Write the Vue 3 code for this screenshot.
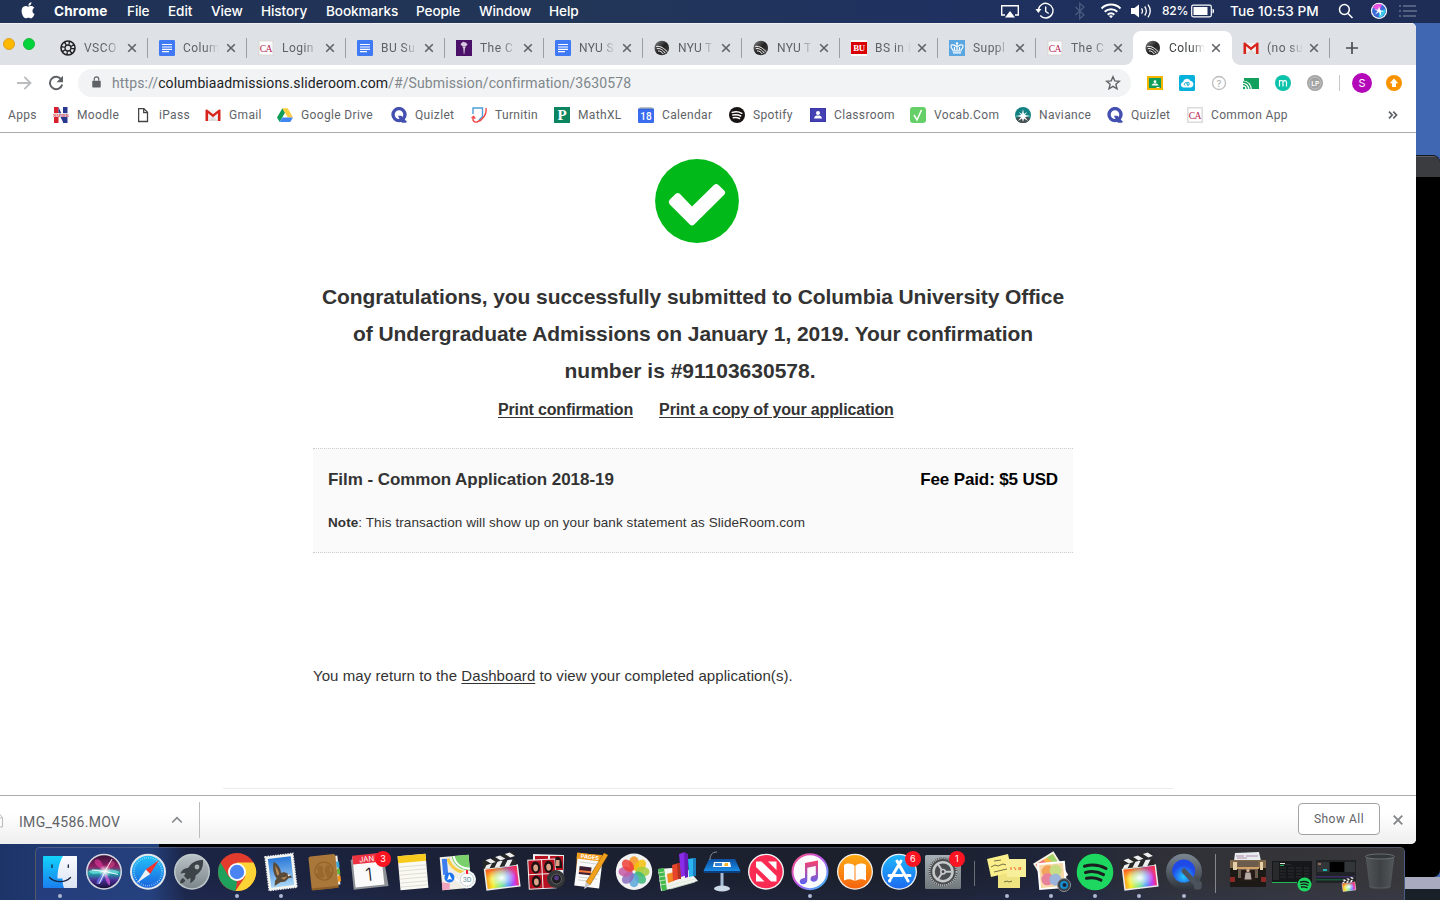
<script setup>
const menus = ['Chrome', 'File', 'Edit', 'View', 'History', 'Bookmarks', 'People', 'Window', 'Help']

const tabs = [
  { icon: 'vsco', title: 'VSCO' },
  { icon: 'docs', title: 'Colum' },
  { icon: 'ca', title: 'Login' },
  { icon: 'docs', title: 'BU Su' },
  { icon: 'nyu', title: 'The C' },
  { icon: 'docs', title: 'NYU S' },
  { icon: 'slideroom', title: 'NYU T' },
  { icon: 'slideroom', title: 'NYU T' },
  { icon: 'bu', title: 'BS in I' },
  { icon: 'crown', title: 'Suppl' },
  { icon: 'ca', title: 'The C' },
  { icon: 'slideroom', title: 'Colum', active: true },
  { icon: 'gmail', title: '(no su' },
]

const bookmarks = [
  { icon: 'moodle', title: 'Moodle' },
  { icon: 'file', title: 'iPass' },
  { icon: 'gmail', title: 'Gmail' },
  { icon: 'drive', title: 'Google Drive' },
  { icon: 'quizlet', title: 'Quizlet' },
  { icon: 'turnitin', title: 'Turnitin' },
  { icon: 'mathxl', title: 'MathXL' },
  { icon: 'calendar', title: 'Calendar' },
  { icon: 'spotify-dark', title: 'Spotify' },
  { icon: 'classroom', title: 'Classroom' },
  { icon: 'vocab', title: 'Vocab.Com' },
  { icon: 'naviance', title: 'Naviance' },
  { icon: 'quizlet', title: 'Quizlet' },
  { icon: 'ca', title: 'Common App' },
]

const extensions = ['ext-classroom', 'ext-cloud', 'ext-help', 'ext-cast', 'ext-m', 'ext-lp']

const dock = [
  { icon: 'finder', running: true }, { icon: 'siri' }, { icon: 'safari' }, { icon: 'launchpad' },
  { icon: 'chrome', running: true }, { icon: 'mail', running: true }, { icon: 'contacts' },
  { icon: 'ical', badge: 3 }, { icon: 'notes' }, { icon: 'maps' }, { icon: 'fcp' }, { icon: 'photobooth' },
  { icon: 'pages' }, { icon: 'photos' }, { icon: 'numbers' }, { icon: 'keynote' }, { icon: 'news' },
  { icon: 'itunes', running: true }, { icon: 'books' }, { icon: 'appstore', badge: 6 },
  { icon: 'settings', badge: 1 }, { sep: true },
  { icon: 'stickies', running: true }, { icon: 'photoslib', running: true }, { icon: 'spotify', running: true },
  { icon: 'fcp', running: true }, { icon: 'quicktime', running: true }, { sep: true, tall: true },
  { icon: 'win1' }, { icon: 'win2' }, { icon: 'win3' }, { icon: 'trash' },
]
const petals = ['#f7941e', '#f4c20d', '#a6ce39', '#3cb878', '#5aa7dc', '#8b6fc0', '#c65aa3', '#ee4036']

const serif = 'Liberation Serif, serif'
const sans = 'Inter, sans-serif'
// Lettering drawn on top of the icon shapes
const labels = {
  ca: [{ t: 'CA', x: 7.7, y: 11.6, 'font-family': serif, 'font-size': 9.6, 'letter-spacing': -0.7, fill: '#b51f55' }],
  bu: [{ t: 'BU', x: 8, y: 11.2, 'font-family': serif, 'font-weight': 'bold', 'font-size': 8.8, 'letter-spacing': -0.4, fill: '#fff' }],
  moodle: [{ t: 'NAPIER', x: 8, y: 9.6, 'font-family': serif, 'font-weight': 'bold', 'font-size': 4.2, fill: '#d43b4a' }],
  mathxl: [{ t: 'P', x: 8, y: 13, 'font-family': serif, 'font-weight': 'bold', 'font-size': 15, fill: '#fff' }],
  calendar: [{ t: '18', x: 8, y: 13, 'font-family': 'Roboto, sans-serif', 'font-weight': 500, 'font-size': 10, fill: '#fff' }],
  'ext-help': [{ t: '?', x: 8, y: 11.5, 'font-family': sans, 'font-size': 9.5, fill: '#aaa' }],
  'ext-lp': [{ t: 'LP', x: 8.3, y: 10.5, 'font-family': sans, 'font-weight': 600, 'font-size': 6.8, fill: '#fff' }],
  ical: [
    { t: 'JAN', x: 21, y: 11.5, 'font-family': sans, 'font-size': 7.5, fill: '#fff', transform: 'rotate(-6 22 22)' },
    { t: '1', x: 21.5, y: 31, 'font-family': sans, 'font-weight': 300, 'font-size': 18, fill: '#222', transform: 'rotate(-6 22 22)' },
  ],
  maps: [{ t: '3D', x: 32, y: 32, 'font-family': sans, 'font-size': 6.5, fill: '#518a9c' }],
  pages: [{ t: 'PAGES', x: 20, y: 9, 'font-family': sans, 'font-weight': 700, 'font-size': 5.5, fill: '#fff', transform: 'rotate(7 20 22)' }],
}
const attrs = ({ t, ...rest }) => rest
</script>

<template>
  <div class="desktop">
    <svg class="defs" width="0" height="0" aria-hidden="true">
      <defs>
        <linearGradient id="g-rainbow"><stop offset="0" stop-color="#ff9a1f" /><stop offset=".2" stop-color="#f4f02a" /><stop offset=".45" stop-color="#4fe06a" /><stop offset=".65" stop-color="#3a8dff" /><stop offset=".85" stop-color="#c63df0" /><stop offset="1" stop-color="#ff2a4a" /></linearGradient>
        <linearGradient id="g-warm" x2="0" y2="1"><stop offset="0" stop-color="#ff2a2a" stop-opacity=".75" /><stop offset=".5" stop-color="#ff5a2a" stop-opacity="0" /></linearGradient>
        <radialGradient id="g-white"><stop offset="0" stop-color="#fff" /><stop offset="1" stop-color="#fff" stop-opacity="0" /></radialGradient>
        <linearGradient id="g-fb" x2="0" y2="1"><stop offset="0" stop-color="#12d3fb" /><stop offset="1" stop-color="#1a7ff0" /></linearGradient>
        <linearGradient id="g-fw" x2="0" y2="1"><stop offset="0" stop-color="#fafcff" /><stop offset="1" stop-color="#dbe3f2" /></linearGradient>
        <linearGradient id="g-saf" x2="0" y2="1"><stop offset="0" stop-color="#22c3fb" /><stop offset="1" stop-color="#1a63dd" /></linearGradient>
        <linearGradient id="g-lp" x2="0" y2="1"><stop offset="0" stop-color="#b9c2c6" /><stop offset="1" stop-color="#7c878b" /></linearGradient>
        <linearGradient id="g-mail" x2="0" y2="1"><stop offset="0" stop-color="#2a78d8" /><stop offset="1" stop-color="#a9d6f5" /></linearGradient>
        <linearGradient id="g-book" x2="0" y2="1"><stop offset="0" stop-color="#ffaa13" /><stop offset="1" stop-color="#f4640f" /></linearGradient>
        <linearGradient id="g-as" x2="0" y2="1"><stop offset="0" stop-color="#1fb6fb" /><stop offset="1" stop-color="#1b6bf0" /></linearGradient>
        <linearGradient id="g-set" x2="0" y2="1"><stop offset="0" stop-color="#a7b0b6" /><stop offset="1" stop-color="#70787c" /></linearGradient>
        <linearGradient id="g-itr" x2="1" y2="1"><stop offset="0" stop-color="#ff4f7b" /><stop offset=".5" stop-color="#c05bf3" /><stop offset="1" stop-color="#22c7f8" /></linearGradient>
        <linearGradient id="g-itn" x2="0" y2="1"><stop offset="0" stop-color="#fb3f6b" /><stop offset="1" stop-color="#5a63f5" /></linearGradient>
        <linearGradient id="g-qt" x2="0" y2="1"><stop offset="0" stop-color="#7c8793" /><stop offset="1" stop-color="#2e343c" /></linearGradient>
        <radialGradient id="g-qc" cy=".75"><stop offset="0" stop-color="#25c8ff" /><stop offset="1" stop-color="#1f4ae8" /></radialGradient>
        <linearGradient id="g-key" x2="0" y2="1"><stop offset="0" stop-color="#0d4f9f" /><stop offset="1" stop-color="#1a8ce8" /></linearGradient>
        <linearGradient id="g-trash"><stop offset="0" stop-color="#5b6266" /><stop offset=".5" stop-color="#414548" /><stop offset="1" stop-color="#5c6468" /></linearGradient>
        <linearGradient id="g-sr" x2="1" y2="1"><stop offset="0" stop-color="#888" /><stop offset=".5" stop-color="#222" /><stop offset="1" stop-color="#444" /></linearGradient>
        <linearGradient id="g-siri" x2="0" y2="1"><stop offset="0" stop-color="#3a1238" /><stop offset=".35" stop-color="#8d1f66" /><stop offset=".55" stop-color="#1fa6a8" /><stop offset=".75" stop-color="#4a2f96" /><stop offset="1" stop-color="#171238" /></linearGradient>
      </defs>

      <!-- Favicons -->
      <symbol id="vsco" viewBox="0 0 16 16"><g fill="none" stroke="#202124"><circle cx="8" cy="8" r="7" stroke-width="1.6" /><circle cx="8" cy="8" r="3" stroke-width="1.3" /><circle cx="8" cy="8" r="5" stroke-width="4" stroke-dasharray="1.3 2.627" /></g></symbol>
      <symbol id="docs" viewBox="0 0 16 16"><rect width="16" height="16" rx="1.2" fill="#4079f4" /><path d="M3 4.500h10M3 7h10M3 9.400h10M3 11.700h7" stroke="#fff" stroke-width="1.2" /></symbol>
      <symbol id="ca" viewBox="0 0 16 16"><path fill="#fff" stroke="#dcdcdc" stroke-width="1.6" d="M.8.8h14.400v14.400H.8z" /></symbol>
      <symbol id="nyu" viewBox="0 0 16 16"><path fill="#4b1068" d="M0 0h16v16H0z" /><path fill="#eee" d="M7.300 7.500h1.600L8.300 14h-.5zM6.600 6.600h3v.9h-3z" /><path fill="#d8c8e0" d="M4.500 4c1-.6 1.200-1 1.500-1.800.8.3 1 .3 1.800-.7.6.9 1.300 1.200 2.300.7 0 1 .9 1.400 1.400 2-.3 1-1 1.400-1.600 2H6.300C5.800 5.400 4.900 5 4.500 4z" /></symbol>
      <symbol id="slideroom" viewBox="0 0 16 16"><circle cx="7.800" cy="8" r="7.300" fill="url(#g-sr)" /><path fill="none" stroke="#fff" stroke-width="1" d="M2.200 6.400C7 6 9.500 8 13.500 12M2.800 8.700c3-.6 6 .8 8.500 4.500M4 11c2-.3 4 .8 5.200 3" /></symbol>
      <symbol id="bu" viewBox="0 0 16 16"><path fill="#fff" d="M0 0h16v16H0z" /><path fill="#d90000" d="M0 2h16v12H0z" /></symbol>
      <symbol id="crown" viewBox="0 0 16 16"><path fill="#5aa6e0" d="M0 0h16v16H0z" /><path fill="none" stroke="#fff" stroke-width="1.2" d="M4 12.800h8M3.500 10.800h9M4 10C1 7 1.500 4.500 4 4.800c2 .3 2.500 2 4 1.700 1.500.3 2-1.400 4-1.700 2.500-.3 3 2.200 0 5.200M8 10V3M6.800 3.500h2.400M8 2v2M5.500 7v3M10.500 7v3" /></symbol>
      <symbol id="gmail" viewBox="0 0 16 16"><path fill="#f1f1f1" d="M1 3h14v11H1z" /><path fill="#ddd" d="M3 14l5-4.500 5 4.500z" /><path fill="#d8251c" d="M.5 14V3q0-.7 1.500-.5L8 7.300l6-4.800q1.500-.2 1.500.5v11h-2.600V6.200L8 10.200 3.100 6.200V14z" /></symbol>
      <symbol id="moodle" viewBox="0 0 16 16"><path fill="#d8202f" d="M1 0h4.500v16H1z" /><path fill="#29378f" d="M10 0h4.500v16H10zM5.500 0l5 11v5l-5-10z" /><path fill="#fff" opacity=".8" d="M0 6h16v4H0z" /></symbol>
      <symbol id="file" viewBox="0 0 16 16"><path fill="#fff" stroke="#444" stroke-width="1.3" d="M.6 1.600h5.300l3.600 3.700v9.200H.6zM5.700 1.600v4h3.800" /></symbol>
      <symbol id="drive" viewBox="0 0 16 16"><path fill="#0f9d58" d="M5.400 1.200L8 5.700 2.700 15 0 10.400z" /><path fill="#ffcd40" d="M5.400 1.200h5.300l5.300 9.200h-5.300z" /><path fill="#4285f4" d="M5.400 10.400H16L13.300 15H2.700z" /></symbol>
      <symbol id="quizlet" viewBox="0 0 16 16"><circle cx="8" cy="7.600" r="6" fill="none" stroke="#4350af" stroke-width="3.400" /><path fill="#4350af" d="M7 8.800h3.400l5 5.400v1.500h-4.500L9 13z" /></symbol>
      <symbol id="turnitin" viewBox="0 0 16 16"><path fill="#fff" stroke="#4d9fd6" stroke-width="1.4" d="M2 7V1h9.500v8.500L8 13" /><path fill="none" stroke="#ef4848" stroke-width="1.4" d="M15 1c1 6-3 12-9 14-3 .5-5-1.500-3.500-5M.5 11l2.200-1.500 1.500 2.200" /></symbol>
      <symbol id="mathxl" viewBox="0 0 16 16"><path fill="#0a8560" d="M0 0h16v16H0z" /></symbol>
      <symbol id="calendar" viewBox="0 0 16 16"><path fill="#c4c4c4" d="M1.500 0h13v3h-13z" /><path fill="#3367d6" d="M0 1.500h16V7H0z" /><rect y="3" width="16" height="13" rx="1" fill="#3a6cf0" /></symbol>
      <symbol id="spotify-dark" viewBox="0 0 16 16"><circle cx="8" cy="8" r="8" fill="#191414" /><path fill="none" stroke="#fff" stroke-linecap="round" stroke-width="1.5" d="M3.200 5.400c3-.9 6.800-.7 9.600.9M3.800 8.100c2.700-.7 5.600-.4 7.900.9M4.300 10.700c2.200-.5 4.300-.3 6.200.8" /></symbol>
      <symbol id="classroom" viewBox="0 0 16 16"><path fill="#3b37a8" d="M0 1h16v14H0z" /><path fill="#5650c4" d="M1 2h14v12H1z" opacity=".4" /><circle cx="8" cy="6" r="2" fill="#fff" /><path fill="#fff" d="M4 11.500c.4-2.500 2-3 4-3s3.600.5 4 3z" /></symbol>
      <symbol id="vocab" viewBox="0 0 16 16"><rect width="16" height="16" rx="3" fill="#66cf68" /><path fill="none" stroke="#fff" stroke-width="1.5" d="M4 8l3 5 4.500-10" /></symbol>
      <symbol id="naviance" viewBox="0 0 16 16"><circle cx="8" cy="8" r="8" fill="#138181" /><path fill="#465052" d="M.8 11.500Q8 7 15.200 11.500A8 8 0 0 1 .8 11.500z" /><path fill="#fff" d="M8 2l1 5 3-2-2 3 5.500 1L10 10l3 4-4-2.500L8 15l-1-3.500L3 14l3-4L.5 9 6 8 4 5l3 2z" /></symbol>

      <!-- Toolbar extensions -->
      <symbol id="ext-classroom" viewBox="0 0 16 16"><path fill="#f4b400" d="M0 1h16v14H0z" /><path fill="#0f9d58" d="M2 3h12v10H2z" /><circle cx="8" cy="6.700" r="1.400" fill="#fff" /><path fill="#fff" d="M4.500 10.500c.5-1.700 2-2 3.500-2s3 .3 3.500 2zM9.500 13h3v-1h-3z" /></symbol>
      <symbol id="ext-cloud" viewBox="0 0 16 16"><rect width="16" height="16" rx="1.5" fill="#08b0dc" /><path fill="#fff" d="M4.500 12.500a2.800 2.800 0 0 1-.5-5.500A4 4 0 0 1 11.500 6a3.300 3.300 0 0 1 .3 6.500z" /><path fill="none" stroke="#08a5d0" d="M6 10.500a1.600 1.600 0 1 1 2-2.500M8.200 10.200a1.500 1.500 0 1 0 0-2.800z" /></symbol>
      <symbol id="ext-help" viewBox="0 0 16 16"><circle cx="8" cy="8" r="6.500" fill="#fff" stroke="#bdbdbd" stroke-width="1.300" /></symbol>
      <symbol id="ext-cast" viewBox="0 0 16 16"><path fill="#12a05c" d="M1 3h15v11H1z" /><path fill="#fff" d="M0 5.500A9 9 0 0 1 9 15H0z" /><path fill="none" stroke="#12a05c" stroke-width="1.300" d="M0 7a7 7 0 0 1 7 7M0 9.700A4.300 4.300 0 0 1 4.300 14" /><circle cx="1" cy="13" r="1.200" fill="#12a05c" /></symbol>
      <symbol id="ext-m" viewBox="0 0 16 16"><circle cx="8" cy="8" r="8" fill="#0cc2ab" /><path fill="none" stroke="#fff" stroke-width="1.200" d="M4.500 11.500V5M4.500 7c.3-2 3.500-2 3.500.2v4.300M8 7.200c.2-2.200 3.500-2.200 3.500 0v4.300" /></symbol>
      <symbol id="ext-lp" viewBox="0 0 16 16"><circle cx="8" cy="8" r="8" fill="#a3a3a3" /><circle cx="8" cy="8" r="6" fill="none" stroke="#c6c6c6" stroke-width=".8" /></symbol>

      <!-- Dock icons -->
      <symbol id="finder" viewBox="0 0 44 44"><rect x="5" y="6" width="34" height="32" rx="1" fill="url(#g-fb)" /><path fill="url(#g-fw)" d="M25 6h13.200a.8.8 0 0 1 .8.800v30.400a.8.8 0 0 1-.8.800H26c-1.300-3.500-1.500-7-1.500-9.500H19.500C19.500 20 21.500 12 25 6z" /><path fill="none" stroke="#15233f" stroke-width="1.300" stroke-linecap="round" d="M14 14.800v2.600M30.300 14.800v2.600M11.500 27.500c6 5.500 15.500 5.500 21 0" /></symbol>
      <symbol id="siri" viewBox="0 0 44 44"><circle cx="22" cy="21.700" r="18" fill="#d8d8e2" /><circle cx="22" cy="21.700" r="16.500" fill="url(#g-siri)" /><path fill="#e93aa0" opacity=".6" d="M23 21C16 17 11 14 13 10c5-3 8 4 10 11z" /><path fill="#f05590" opacity=".45" d="M23 21c1-7 5-12 9-9 3 3-3 7-9 9z" /><path fill="#6fe8e6" opacity=".75" d="M23 21.500c-6-3-12-3-16.500 0C10 25 17 24 23 21.500zM23 21.500c5-3 10-2.500 14.500.5-4 3-9 2-14.500-.5z" /><path fill="#e35fe0" opacity=".7" d="M22.500 22c0 6 2 11 5 13.500 2-4-1-9-5-13.500z" /><path fill="#6d7df0" opacity=".7" d="M22.500 22c-4 4-8 7-8 12 5 1 8-6 8-12z" /><path stroke="#fff" opacity=".85" d="M23 21.500L30 9M23 21.500L10 20M23 21.500l13 3M23 21.500L17 34" /><circle cx="23" cy="21.500" r="6.500" fill="url(#g-white)" /></symbol>
      <symbol id="safari" viewBox="0 0 44 44"><circle cx="22" cy="21.700" r="18" fill="#e4e8ec" /><circle cx="22" cy="21.700" r="16" fill="url(#g-saf)" /><circle cx="22" cy="21.700" r="14" fill="none" stroke="#b9e5fb" stroke-width="1.500" stroke-dasharray=".6 1.600" /><path fill="#f2332f" d="M33 10L19.800 19.500l4.400 4.400z" /><path fill="#eef2f5" d="M11 33l8.800-13.500 4.400 4.400z" /></symbol>
      <symbol id="launchpad" viewBox="0 0 44 44"><circle cx="22" cy="21.700" r="18" fill="#bec8ca" /><circle cx="22" cy="21.700" r="16.500" fill="url(#g-lp)" /><path fill="#3d4448" d="M33 10c-8-.3-12 3.500-15 8-3.300-.3-6 2-7.700 5.600 2-.7 3.700-.8 5.200-.3L14 26l3.500 3.500 2.800-1.500c.5 1.500.3 3.200-.3 5.200 3.600-1.700 5.900-4.500 5.500-7.700 4.500-3 8.200-7 7.500-15.500zM13 28c-2 1-3 3-3 5.500 2.500 0 4.500-1 5.500-3z" /><circle cx="27" cy="17" r="2.400" fill="#a7b0b4" /></symbol>
      <symbol id="chrome" viewBox="0 0 44 44"><circle cx="22" cy="22" r="19" fill="#e33b2e" /><path fill="#1fa15d" d="M5.500 12.500L13.800 26.700 22 31.500l-1.500 9.400A19 19 0 0 1 5.500 12.500z" /><path fill="#fdd335" d="M22 12.500h16.500A19 19 0 0 1 20.500 41l9.700-14.300z" /><circle cx="22" cy="22" r="9" fill="#fff" /><circle cx="22" cy="22" r="7.200" fill="#4a83f2" /></symbol>
      <symbol id="mail" viewBox="0 0 44 44"><g transform="rotate(-7 22 22)"><path fill="#f4f4f1" stroke="#f4f4f1" stroke-width="1.500" stroke-dasharray="1.500 1" d="M8 5h28v34H8z" /><path fill="url(#g-mail)" d="M10.500 7.500h23v29h-23z" /><path fill="#5a4a38" d="M16 11c4 3 6 7 6 12 2-1 5 0 7 2l4 4-4 0-4 3-5 0-6 3 1-5 2-2c-3-5-3-11-1-17z" /><path fill="#b98a55" d="M17 15c2 3 3 6 3 9l-2 1c-1-3-1-7-1-10zM21 28l7-1-4 3z" /><path fill="#fff" d="M28 25l3 1-2 1.500z" /></g></symbol>
      <symbol id="contacts" viewBox="0 0 44 44"><g transform="rotate(-6 22 22)"><path fill="#efefed" d="M33 7h3v29h-3z" /><path fill="#37a6d5" d="M34 13h3v6h-3z" /><path fill="#6bb43c" d="M34 20h3v6h-3z" /><path fill="#f6971c" d="M34 27h3v6h-3z" /><rect x="7" y="5" width="27" height="34" rx="2" fill="#a9773a" /><path fill="#8b5d28" d="M7 37h27v2H7z" /><circle cx="21" cy="21" r="9" fill="none" stroke="#936328" stroke-width="1.300" /><path fill="#936328" opacity=".75" d="M17.500 15a3.500 3.500 0 0 1 2 6l2 4-2 3h-4c-1-2-3-2-3-4l3-3c-2-2-1-6 2-6zM25 15a3.500 3.500 0 0 1 1.500 6l3 3-3 4h-3l-1-4c-1-2-1-6 2.500-9z" /></g></symbol>
      <symbol id="ical" viewBox="0 0 44 44"><g transform="rotate(-6 22 22)"><path fill="#8f9296" d="M5 8h33l2 30H5z" /><path fill="#fafafa" d="M7 5h29v31H7z" /><path fill="#ee3342" d="M7 4h29v9H7z" /></g></symbol>
      <symbol id="notes" viewBox="0 0 44 44"><g transform="rotate(-5 22 22)"><path fill="#faf9f3" d="M8 5h28v34H8z" /><path fill="#f7cb1d" d="M8 5h28v7H8z" /><path stroke="#cfcdc3" stroke-width=".6" d="M8 16h28M8 20h28M8 24h28M8 28h28M8 32h28M8 36h28" /></g></symbol>
      <symbol id="maps" viewBox="0 0 44 44"><g transform="rotate(-5 20 22)"><path fill="#f1efe5" d="M6 6h29v33H6z" /><path fill="#7ad16c" d="M18 6h17v16c-9-1-16-7-17-16z" /><path fill="none" stroke="#fff" stroke-width="2" d="M20 6c1 8 7 13 15 14M13 22l12 12" /><path fill="none" stroke="#f7cd45" stroke-width="3" d="M14 8c3 10 8 14 20 17" /><path fill="#f0a4bd" d="M6 31l8 2-1 6H6z" /><path fill="#3c7df0" d="M8 8h5v16H8z" /><circle cx="14" cy="27" r="5" fill="#1f75ee" /><path fill="#fff" d="M14 23.500l2.500 6-2.500-1-2.500 1z" /></g><circle cx="32" cy="29.500" r="9" fill="#f1f4f5" /><circle cx="32" cy="29.500" r="6.500" fill="#fff" stroke="#9da5a8" stroke-width=".8" stroke-dasharray="1 .8" /><path fill="#f23" d="M31 20h2v4h-2z" /></symbol>
      <symbol id="fcp" viewBox="0 0 44 44"><g transform="rotate(-7 22 22)"><path fill="url(#g-rainbow)" stroke="#ececec" stroke-width="1.500" d="M6 17h33v21H6z" /><path fill="url(#g-warm)" d="M7 18h31v19H7z" /><ellipse cx="22" cy="28" rx="14" ry="11" fill="url(#g-white)" /><path fill="#262727" d="M5 11h33v6H5z" /><path fill="#eee" d="M6 17l4-6h5l-4 6zM16 17l4-6h5l-4 6zM26 17l4-6h5l-4 6z" /><path fill="#262727" d="M4.500 9L37 3l1 5L5.500 14z" /><path fill="#eee" d="M8 8.400l5-1 5 4-5 1zM18 6.500l5-1 5 4-5 1zM28 4.700l5-1 4.800 4-4.800 1z" /></g></symbol>
      <symbol id="photobooth" viewBox="0 0 44 44"><path fill="#eee" d="M9 4l31 1-1 29-30 1z" /><path fill="#b81222" d="M11 6h13v14H11zM26 6h13v14H26z" /><path fill="#1f1213" d="M30 18c-2-15 9-15 8 0z" /><path fill="#d69d83" d="M32 10h3.500v6H32z" /><g transform="rotate(-3 20 24)"><path fill="#f4f2f1" d="M4 9h28v30H4z" /><path fill="#b81222" d="M5 10h12.800v13.500H5zM18.800 10h12.400v13.500H18.800zM5 24.500h12.800V38H5zM18.800 24.500h12.400V38H18.800z" /><g fill="#1f1213"><ellipse cx="12" cy="17" rx="4.500" ry="6" /><ellipse cx="25" cy="17" rx="4.500" ry="6" /><ellipse cx="12" cy="31" rx="4.500" ry="6" /></g><g fill="#dba388"><ellipse cx="12" cy="17.500" rx="2.400" ry="3.500" /><ellipse cx="25" cy="17.500" rx="2.400" ry="3.500" /><ellipse cx="12" cy="31.500" rx="2.400" ry="3.500" /></g></g><circle cx="32" cy="29" r="9" fill="#343638" /><circle cx="32.500" cy="29" r="5" fill="#1b1c20" stroke="#606266" /><circle cx="32.500" cy="28" r="2.400" fill="#553a86" /></symbol>
      <symbol id="pages" viewBox="0 0 44 44"><path fill="#f39d1d" d="M9 3l25 2-3 20-23 4z" /><g transform="rotate(7 20 22)"><path fill="#fafafa" d="M8 9h25v28H8z" /><path fill="#f39d1d" d="M7 4h26v6H7z" /><path fill="#3c1d33" d="M11 17h12v8H11z" /><path fill="#f4793a" d="M11 21h12v2H11z" /><path stroke="#bbb" stroke-width=".6" d="M11 13h19M25 17h6M25 20h6M25 23h6M11 28h19M11 31h14" /></g><path fill="#f0a01b" stroke="#8a540b" stroke-width=".5" d="M36 3l4 2-18 30-4-3z" /><path fill="#c8c8ca" d="M18 32l4 3-4 3-2 1z" /></symbol>
      <symbol id="photos" viewBox="0 0 44 44"><circle cx="22" cy="21.700" r="18.200" fill="#f2f2f2" /><ellipse v-for="(c, i) in petals" :key="c" cx="22" cy="13.200" rx="5" ry="7" :fill="c" opacity=".85" :transform="`rotate(${i * 45} 22 21.700)`" /></symbol>
      <symbol id="numbers" viewBox="0 0 44 44"><path fill="#f3f3f0" d="M2 19l28-2 12 14-32 9-5 1z" /><path fill="#43ba4b" d="M2 19l6-1 3 22-5 1z" /><path stroke="#d5eecf" stroke-width=".8" d="M2 23l6-1M3 27l6-1M3 31l6-1M4 35l6-1M12 36l27-7M14 39l25-7" /><path fill="#f48b22" d="M11 24l7-2v9l-6 2z" /><path fill="#e6452c" d="M16 15l7-2v16l-6 2z" /><path fill="#b2301f" d="M21 13h4v16h-3z" /><path fill="#8a2be8" d="M23 4l6-2 2 23-6 2z" /><path fill="#681bb8" d="M28 2l4 2v23l-3 1z" /><path fill="#2bb4f2" d="M32 9l6-1v18l-5 1z" /><path fill="#1b80bf" d="M37 8h3v18h-3z" /></symbol>
      <symbol id="keynote" viewBox="0 0 44 44"><path fill="#a8bdd8" d="M20.500 22h3v16h-3z" /><ellipse cx="22" cy="38.500" rx="8" ry="3" fill="#ccd9e7" /><path fill="url(#g-key)" d="M9 9h26l5.500 12h-37z" /><path fill="#0d3f7e" d="M3.500 21h37l-1 2h-35z" /><path fill="#fff" d="M14 12h16l1 5H13z" /><path fill="#f6b625" d="M25 13h3v3h-4z" /><path fill="#3b83d7" d="M15 13h7v3h-7z" /><path fill="none" stroke="#8b929b" stroke-width="1" d="M10 10c0-5 2-8 7-8" /></symbol>
      <symbol id="news" viewBox="0 0 44 44"><circle cx="22" cy="21.700" r="18" fill="#f4f4f6" /><circle cx="22" cy="21.700" r="16.600" fill="#fb2a53" /><path fill="#fff" d="M12 11.500h5.500L32.500 26v5.500H27L12 17zM24 11.500h8.500V20zM12 23v8.500h8.500z" /></symbol>
      <symbol id="itunes" viewBox="0 0 44 44"><circle cx="22" cy="21.700" r="17.500" fill="#fbfbfd" stroke="url(#g-itr)" stroke-width="2" /><path fill="url(#g-itn)" d="M17 13l13-2.500v17c0 5-7.500 5.500-7.500 1.600 0-3.300 3.500-3.200 5.300-4V16l-8.500 1.700v12.500c0 4.800-7.500 5.200-7.500 1.500 0-3.300 3.500-3.200 5.200-4z" /></symbol>
      <symbol id="books" viewBox="0 0 44 44"><circle cx="22" cy="21.700" r="18" fill="#f4f0eb" /><circle cx="22" cy="21.700" r="16.700" fill="url(#g-book)" /><path fill="#fff" d="M11 15c4-2.500 8-1.500 10.500.7V31c-3-2-7-2.300-10.500-.5zM33 15c-4-2.500-8-1.500-10.500.7V31c3-2 7-2.300 10.500-.5z" /></symbol>
      <symbol id="appstore" viewBox="0 0 44 44"><circle cx="22" cy="21.700" r="18" fill="#edf1f4" /><circle cx="22" cy="21.700" r="16.700" fill="url(#g-as)" /><path fill="none" stroke="#fff" stroke-width="3" stroke-linecap="round" d="M20 11l9.500 17M24 11l-10 17M12 25.500h13M30 25.500h3M13 30l-.5 1M30.500 30l.6 1" /></symbol>
      <symbol id="settings" viewBox="0 0 44 44"><rect x="4" y="5" width="36" height="34" rx="1.500" fill="url(#g-set)" /><circle cx="22" cy="21.700" r="14.500" fill="#4b4e50" /><circle cx="22" cy="21.700" r="13.600" fill="none" stroke="#b7babb" stroke-width="2" stroke-dasharray="1.100 1" /><circle cx="22" cy="21.700" r="9.500" fill="none" stroke="#c7cacb" stroke-width="2.500" /><path stroke="#c7cacb" stroke-width="2" d="M22 21.700h8.500M22 21.700l-5 7.500M22 21.700l-5-7.500" /><circle cx="22" cy="21.700" r="3" fill="#c7cacb" /><circle cx="22" cy="21.700" r="1.400" fill="#444" /></symbol>
      <symbol id="stickies" viewBox="0 0 44 44"><path fill="#efe381" d="M13 22h22v16H13z" /><path fill="#faef8a" d="M2 9l21-5 4 18-21 5z" /><path fill="#f8ef9a" d="M21 9h20v18H22z" /><path fill="none" stroke="#555036" stroke-width=".8" d="M9 11l7-1M6 17l4-2 3 1 5-2 3 1M9 22l13-3M19 32l3-1 2 1 3-1" /><path stroke="#ef622a" fill="none" d="M26 17v3M29 17l2 3M34 17v3M36 17l-1 3" /></symbol>
      <symbol id="photoslib" viewBox="0 0 44 44"><g transform="rotate(-32 22 18)"><path fill="#f5f2e7" d="M9 5h24v28H9z" /><path fill="#f8b24b" d="M11 7h20v11H11z" /><path fill="#f1767c" d="M11 7h9v22h-9z" /><path fill="#9fd46a" d="M24 7h7v20z" /></g><g transform="rotate(-5 22 25)"><path fill="#fff" d="M9 12h28v27H9z" /><path fill="#f8d7a8" d="M11 14h24v23H11z" /><circle cx="19" cy="21" r="6" fill="#f2a45a" /><circle cx="27" cy="21" r="6" fill="#c8dc86" /><circle cx="18" cy="29" r="6" fill="#e8829c" /><circle cx="26" cy="30" r="6" fill="#9cb6db" /></g><circle cx="35" cy="35" r="6.500" fill="#394046" stroke="#8a9194" /><circle cx="35" cy="35" r="4" fill="#128fd0" /><circle cx="35.500" cy="35" r="2" fill="#202036" /></symbol>
      <symbol id="spotify" viewBox="0 0 44 44"><circle cx="22" cy="22" r="18.300" fill="#1ed760" /><path fill="none" stroke="#1b1f22" stroke-linecap="round" stroke-width="3" d="M11.500 16.300c7-2 15-1.300 21.500 2.200M12.500 22.500c6-1.600 12.500-.9 18 2.100M13.500 28.300c5-1.200 10-.7 14.500 1.800" /></symbol>
      <symbol id="quicktime" viewBox="0 0 44 44"><path fill="#4c535b" d="M24 25l5-5 11 13-1 6-6 .5z" /><circle cx="22" cy="21.700" r="18" fill="url(#g-qt)" /><circle cx="21.700" cy="21" r="11.500" fill="url(#g-qc)" /><path stroke="#4b535d" stroke-width="5" stroke-linecap="round" d="M22 21l15 16" /></symbol>
      <symbol id="win1" viewBox="0 0 44 44"><path fill="#e8ecee" d="M9 3l24-1 2 9H8z" /><path stroke="#b18cad" d="M10 6h8M20 6h12M11 8h10" /><path fill="#1d1917" d="M4 10h36v27H4z" /><path fill="#a98a60" d="M4 10h36v8H4z" opacity=".7" /><path fill="#e4cfa9" d="M7 12h4v8H7zM34 12h3v8h-3z" /><path fill="#6b5c4d" d="M12 11h20v17H12z" /><path fill="#d0a365" d="M11 17h22v2H11z" /><path fill="#251b18" d="M15 20h14v11H15z" /><circle cx="22" cy="20.500" r="1.700" fill="#d1ab8e" /><path fill="#b7aca5" d="M19.500 22.500h5l1 7h-7z" /><path fill="#8c2926" d="M4 27h5v5H4zM35 27h5v5h-5z" /></symbol>
      <symbol id="win2" viewBox="0 0 44 44"><path fill="#151718" d="M2 11h40v22H2z" /><path fill="#282b2c" d="M3 12h6v18H3zM11 14h10v1H11z" /><path stroke="#34373a" stroke-width=".8" stroke-dasharray="6 2" d="M10 18h29M10 21h29M10 24h29M10 27h29" /><path fill="#ddd" d="M10 13h5v1h-5z" /><path fill="#20b954" d="M2 32h25v1H2zM10 15h4v1h-4z" /><circle cx="34.500" cy="34.500" r="7" fill="#1ed760" /><path fill="none" stroke="#151718" stroke-linecap="round" stroke-width="1.300" d="M30.500 32c3-.8 6-.5 8 .8M31 34.500c2-.6 5-.3 7 .8M31.500 37c2-.4 4-.2 5.500.6" /></symbol>
      <symbol id="win3" viewBox="0 0 44 44"><path fill="#202325" d="M2 10h40v23H2z" /><path fill="#010101" d="M16 12h14v10H16z" /><path fill="#323639" d="M3 12h12v10H3zM31 12h10v10H31z" /><path fill="#986d59" d="M4 13h3v2H4z" /><path fill="#22b4b3" d="M9 19h4v2H9z" /><path fill="#3c2c66" d="M2 26h39v1.500H2z" /><path fill="#145838" d="M2 29h30v1.500H2z" /></symbol>
      <symbol id="trash" viewBox="0 0 44 44"><path fill="url(#g-trash)" opacity=".75" d="M7.500 6h29l-4 31c-2 3-19 3-21 0z" /><ellipse cx="22" cy="6.500" rx="14.500" ry="2.500" fill="#33383a" stroke="#747b7e" stroke-width=".8" /><path fill="none" stroke="#5f6669" stroke-width=".6" d="M11.500 36c3 2.500 18 2.500 21 0" /></symbol>
    </svg>

    <header class="menubar">
      <svg class="apple" viewBox="0 0 14 17"><path fill="#fff" d="M11.500 9c0-1.900 1.200-2.800 1.800-3.200C12.400 4.500 11 4.100 10.100 4.100 8.800 4 7.900 4.800 7.200 4.800c-.7 0-1.600-.7-2.700-.7C2.300 4.200.6 6 .6 9c0 3.400 2.200 7.300 4.200 7.300.9 0 1.500-.6 2.600-.6s1.500.6 2.600.6c1.700 0 3.100-2.800 3.500-4.300-1-.4-2-1.300-2-3zM9.700 2.700C10.200 2 10.500 1.200 10.400.3c-1.600.1-3.100 1.600-3 3.400 1 .1 1.800-.4 2.300-1z" /></svg>
      <nav class="menus"><span v-for="m in menus" :key="m">{{ m }}</span></nav>
      <div class="status">
        <svg width="20" height="17" viewBox="0 0 20 17"><path fill="none" stroke="#fff" stroke-width="1.400" d="M5 12H1.700V2.700h16.600V12H15" /><path fill="#fff" d="M10 8l5 6.500H5z" /></svg>
        <svg width="20" height="18" viewBox="0 0 20 18"><path fill="none" stroke="#fff" stroke-width="1.400" d="M3.400 8a7.300 7.300 0 1 1 1.800 5.500M10.700 4.500v5l3 2" /><path fill="#fff" d="M.5 7h6L3.300 11z" /></svg>
        <svg class="bt" width="12" height="18" viewBox="0 0 12 18"><path fill="none" stroke="#4c5d80" stroke-width="1.200" d="M1.500 5l8.500 8-4.300 3.700V1.300L10 5l-8.500 8" /></svg>
        <svg width="22" height="16" viewBox="0 0 22 16"><g fill="none" stroke="#fff" stroke-width="2"><path d="M1.500 5.500a13.500 13.500 0 0 1 19 0M4.700 8.800a9 9 0 0 1 12.600 0M7.700 11.700a4.700 4.700 0 0 1 6.600 0" /></g><path fill="#fff" d="M9 13l2 2.200 2-2.200q-2-1.500-4 0z" /></svg>
        <svg width="22" height="16" viewBox="0 0 22 16"><path fill="#fff" d="M0 5h3.500L8 1.500v13L3.500 11H0z" /><path fill="none" stroke="#fff" stroke-width="1.300" d="M10.500 5.300q2 2.700 0 5.400M13.700 3.500q3.300 4.500 0 9M17 1.700q4.500 6.300 0 12.600" /></svg>
        <span class="pct">82%</span>
        <svg width="24" height="14" viewBox="0 0 24 14"><rect x=".7" y="1.200" width="19.600" height="11.600" rx="1.500" fill="none" stroke="#fff" stroke-width="1.200" /><path fill="#fff" d="M2.500 3h14v8h-14zM21.500 4.800q2.500.5 1 4.400h-1z" /></svg>
        <span class="clock">Tue 10:53 PM</span>
        <svg width="16" height="16" viewBox="0 0 16 16"><path fill="none" stroke="#fff" stroke-width="1.500" d="M9.800 10.200L14.500 15M11.300 6.500a4.900 4.900 0 1 1-9.800 0 4.900 4.900 0 0 1 9.800 0z" /></svg>
        <svg width="18" height="18" viewBox="2 2 40 40"><circle cx="22" cy="21.700" r="18" fill="#fff" /><circle cx="22" cy="21.700" r="15.500" fill="#3c6bd8" /><path fill="#e654dd" d="M22 22L8 14C12 5 22 4 29 8z" /><path fill="#38c8e8" d="M22 22L37 18c0 9-6 17-15 19z" /><path fill="#fff" d="M22 12l3 8 9 4-8-1 1 11-5-10-9 6 6-8-8-4 9 1z" /></svg>
        <svg width="20" height="14" viewBox="0 0 20 14"><path stroke="#64738f" stroke-width="1.600" d="M1 2h2M5 2h13M1 7h2M5 7h14M1 12h2M5 12h13" /></svg>
      </div>
    </header>

    <div class="back-window"><div class="back-title"></div></div>
    <div class="wallpaper-strip"></div>

    <main class="window">
      <div class="tabstrip">
        <div class="lights"><i class="amber"></i><i class="green"></i></div>
        <div v-for="(t, i) in tabs" :key="i" class="tab" :class="{ first: i === 0, active: t.active, narrow: i > 6, 'before-active': i === 10 }">
          <svg class="ico" viewBox="0 0 16 16"><use :href="'#' + t.icon" /><text v-for="l in labels[t.icon]" :key="l.t" text-anchor="middle" v-bind="attrs(l)">{{ l.t }}</text></svg>
          <span class="tab-title">{{ t.title }}</span>
          <svg class="x" viewBox="0 0 10 10"><path d="M1.200 1.200l7.600 7.600M8.800 1.200L1.200 8.800" stroke="#5f6368" stroke-width="1.600" /></svg>
        </div>
        <svg class="plus" viewBox="0 0 12 12"><path d="M6 0v12M0 6h12" stroke="#4a4d51" stroke-width="1.700" /></svg>
      </div>

      <div class="toolbar">
        <svg class="fwd" viewBox="0 0 16 16"><path fill="none" stroke="#babcbe" stroke-width="1.800" d="M1 8h13M8.300 1.800L14.500 8l-6.200 6.200" /></svg>
        <svg class="reload" viewBox="0 0 16 16"><path fill="none" stroke="#5f6368" stroke-width="2" d="M13.300 4.500A6.200 6.200 0 1 0 14.200 9.500" /><path fill="#5f6368" d="M15 .8v6.500H8.500z" /></svg>
        <div class="omnibox">
          <svg class="lock" viewBox="0 0 10 13"><path fill="#5f6368" d="M1 5h8q.7 0 .7.700v6q0 .8-.7.800H1q-.7 0-.7-.8v-6Q.3 5 1 5z" /><path fill="none" stroke="#5f6368" stroke-width="1.300" d="M2.500 5V3.300a2.500 2.500 0 0 1 5 0V5" /></svg>
          <span class="url"><span>https://</span><b>columbiaadmissions.slideroom.com</b><span>/#/Submission/confirmation/3630578</span></span>
          <svg class="star" viewBox="0 0 16 16"><path fill="none" stroke="#5f6368" stroke-width="1.400" d="M8 1.700l1.800 4.200 4.600.4-3.500 3 1.100 4.500L8 11.400l-4 2.400 1.100-4.500-3.500-3 4.600-.4z" /></svg>
        </div>
        <div class="exts"><svg v-for="e in extensions" :key="e" class="ico" viewBox="0 0 16 16"><use :href="'#' + e" /><text v-for="l in labels[e]" :key="l.t" text-anchor="middle" v-bind="attrs(l)">{{ l.t }}</text></svg></div>
        <i class="vline"></i>
        <span class="avatar">S</span>
        <svg class="update" viewBox="0 0 16 16"><circle cx="8" cy="8" r="8" fill="#fb9300" /><path fill="#fff" d="M8 3.500l4.200 4.700H10V12H6V8.200H3.800z" /></svg>
      </div>

      <div class="bookmarks">
        <span class="apps">Apps</span>
        <span v-for="(b, i) in bookmarks" :key="i" class="bm"><svg class="ico" viewBox="0 0 16 16"><use :href="'#' + b.icon" /><text v-for="l in labels[b.icon]" :key="l.t" text-anchor="middle" letter-spacing="0" v-bind="attrs(l)">{{ l.t }}</text></svg>{{ b.title }}</span>
        <svg class="more" viewBox="0 0 10 8"><path fill="none" stroke="#5f6368" stroke-width="1.700" d="M1 .7L4.200 4 1 7.300M5.300.7L8.500 4 5.300 7.300" /></svg>
      </div>

      <section class="page">
        <svg class="check" viewBox="0 0 84 84"><circle cx="42" cy="42" r="41.900" fill="#02b91a" /><path fill="#fff" d="M15.300 40l5.500-5.300q2-1.500 4 0L37 47.500 59.200 25.800q2-1.800 4 0l6 5.700q2 2 0 4.200L39.200 65.500q-2.200 2-4.400 0L15.300 46q-3-3 0-6z" /></svg>
        <h1><span class="l1">Congratulations, you successfully submitted to Columbia University Office</span><span class="l2">of Undergraduate Admissions on January 1, 2019. Your confirmation</span><span class="l3">number is #91103630578.</span></h1>
        <p class="links"><a>Print confirmation</a><a class="copy">Print a copy of your application</a></p>
        <div class="card">
          <div class="row"><strong class="prog">Film - Common Application 2018-19</strong><strong class="fee">Fee Paid: $5 USD</strong></div>
          <p class="note"><b>Note</b>: This transaction will show up on your bank statement as SlideRoom.com</p>
        </div>
        <p class="return">You may return to the <a>Dashboard</a> to view your completed application(s).</p>
        <div class="rule"></div>
      </section>

      <footer class="downloads">
        <svg class="doc" viewBox="0 0 5 15"><path fill="none" stroke="#aaa" stroke-width=".8" d="M0 .5l3.500 4v9.500H0M0 5h3.500" /></svg>
        <span class="fname">IMG_4586.MOV</span>
        <svg class="caret" viewBox="0 0 12 8"><path fill="none" stroke="#85888c" stroke-width="1.700" d="M1.200 6.500L6 1.700l4.800 4.800" /></svg>
        <i class="dsep"></i>
        <span class="showall">Show All</span>
        <svg class="dx" viewBox="0 0 10 10"><path d="M.7.7l8.600 8.600M9.300.7L.7 9.300" stroke="#85878a" stroke-width="1.900" /></svg>
      </footer>
    </main>

    <div class="dock">
      <div v-for="(d, i) in dock" :key="i" :class="d.sep ? ['sep', { tall: d.tall }] : 'app'">
        <template v-if="!d.sep">
          <svg width="44" height="44"><use :href="'#' + d.icon" /><text v-for="l in labels[d.icon]" :key="l.t" text-anchor="middle" v-bind="attrs(l)">{{ l.t }}</text></svg>
          <svg v-if="d.icon === 'win3'" class="mini" viewBox="0 0 44 44"><use href="#fcp" /></svg>
          <span v-if="d.badge" class="badge">{{ d.badge }}</span>
          <i v-if="d.running" class="dot"></i>
        </template>
      </div>
    </div>
  </div>
</template>

<style>
html, body { margin: 0; overflow: hidden; }
</style>

<style scoped>
* { box-sizing: border-box; }
.desktop { position: relative; width: 1440px; height: 900px; overflow: hidden; background: linear-gradient(90deg, #1d3468 0, #22417f 140px, #4067b2 1416px); font-family: Inter, "Liberation Sans", sans-serif; white-space: nowrap; }
.defs { position: absolute; }
svg { display: block; flex: none; }

.menubar { height: 23px; padding-bottom: 1px; display: flex; align-items: center; background: linear-gradient(90deg, #1f3155, #223658 40%, #1f3160 65%, #1e2d55); color: #fff; font-size: 13.6px; font-weight: 500; }
.apple { width: 14px; height: 17px; margin: -2px 0 0 21px; }
.menus { display: grid; grid-template-columns: 73px 41px 43px 50px 65px 90px 63px 70px 40px; margin-left: 19px; margin-top: -1px; letter-spacing: -.1px; }
.menus span:first-child { font-weight: 700; letter-spacing: .15px; }
.status { display: grid; grid-template-columns: 35px 39px 26px 31px 31px 29px 39px 108px 32px 28px 20px; align-items: center; margin-left: 411px; }
.status svg { margin-top: 0; }
.pct { font-size: 12px; letter-spacing: -.25px; margin-top: -1px; }
.clock { letter-spacing: .07px; margin-top: -1px; }

.back-window { position: absolute; left: 159px; top: 155px; width: 1281px; height: 722px; background: #000; border-radius: 7px; overflow: hidden; border-top: 1px solid #14171b; }
.back-title { height: 21px; background: #3a3c3f; border-top: 1px solid #5c5e61; }
.wallpaper-strip { position: absolute; left: 1390px; top: 877px; width: 50px; height: 23px; background: linear-gradient(#a8abc0 12px, #1a2027 12px); }

.window { position: relative; width: 1416px; height: 821px; background: #fff; border-radius: 0 5px 5px 0; overflow: hidden; }
.tabstrip { height: 42px; background: #dee1e6; display: flex; align-items: center; border-top: 1px solid #eceef1; }
.lights { width: 48px; display: flex; gap: 8px; padding-left: 3px; margin-top: -1px; }
.lights i { width: 12px; height: 12px; border-radius: 50%; }
.amber { background: #fdb900; border: 1px solid #dfa023; }
.green { background: #05d33c; border: 1px solid #12b83a; }
.tab { width: 99px; height: 34px; margin-top: 7px; padding-left: 11px; display: flex; align-items: center; position: relative; }
.tab.narrow { width: 98px; }
.tab.first { width: 100px; padding-left: 12px; }
.tab.before-active { width: 97px; }
.tab.active { width: 99px; padding-left: 12px; background: #fff; border-radius: 8px 8px 0 0; }
.tab.active::before, .tab.active::after { content: ""; position: absolute; bottom: 0; width: 8px; height: 8px; }
.tab.active::before { left: -8px; background: radial-gradient(circle at 0 0, transparent 7.5px, #fff 8px); }
.tab.active::after { right: -8px; background: radial-gradient(circle at 100% 0, transparent 7.5px, #fff 8px); }
.tab:not(.active):not(.before-active) { background: linear-gradient(#9b9ea3, #9b9ea3) right 7px / 1px 20px no-repeat; }
.ico { width: 16px; height: 16px; }
.tab-title { width: 36px; margin-left: 8px; overflow: hidden; font: 12px Roboto, sans-serif; letter-spacing: .45px; line-height: 16px; color: #5f6368; mask-image: linear-gradient(90deg, #000 62%, transparent 100%); }
.active .tab-title { color: #3c4043; }
.x { width: 10px; height: 10px; margin-left: 7px; }
.narrow .x { margin-left: 6px; }
.plus { width: 12px; height: 12px; margin: 7px 0 0 16px; }

.toolbar { height: 36px; display: flex; align-items: center; }
.fwd { width: 16px; height: 16px; margin-left: 16px; }
.reload { width: 16px; height: 16px; margin-left: 16px; }
.omnibox { width: 1053px; height: 28px; margin-left: 14px; border-radius: 14px; background: #f1f3f4; display: flex; align-items: center; }
.lock { width: 9px; height: 12px; margin: -2px 0 0 14px; }
.url { margin-left: 11px; flex: 1; font: 14px Roboto, sans-serif; letter-spacing: .1px; color: #80868b; }
.url b { font-weight: 400; color: #202124; }
.star { width: 16px; height: 16px; margin-right: 10px; }
.exts { display: flex; gap: 16px; margin-left: 16px; }
.vline { width: 1px; height: 16px; background: #c6c8cb; margin-left: 16px; }
.avatar { width: 20px; height: 20px; margin-left: 12px; border-radius: 50%; background: #b409b8; color: #fff; font-size: 11px; line-height: 20px; text-align: center; }
.update { width: 16px; height: 16px; margin-left: 14px; }

.bookmarks { height: 32px; border-bottom: 1px solid #a9abad; display: grid; grid-template-columns: 45px 85px 68px 71px 114px 80px 83px 84px 91px 81px 100px 105px 92px 80px 201px 10px; align-items: center; padding: 0 0 3px 8px; font: 12px Roboto, sans-serif; letter-spacing: .35px; color: #5f6368; }
.bm { display: flex; align-items: center; gap: 8px; }
.bm:nth-child(3) { gap: 5px; }
.bm:nth-child(4) { margin-left: -1px; }
.more { width: 10px; height: 8px; }

.page { height: 662px; padding: 26px 0 0; color: #333; font-family: "Liberation Sans", Arial, sans-serif; }
.check { width: 84px; height: 84px; margin-left: 655px; }
h1 { width: 760px; margin: 35px 0 0 313px; font-size: 21px; line-height: 37px; text-align: center; }
h1 span { display: block; }
.l1 { letter-spacing: -.08px; }
.l2 { letter-spacing: -.05px; }
.l3 { margin-right: 6px; }
.links { margin: 11px 0 0 498px; height: 22px; display: flex; gap: 26px; font-size: 16px; font-weight: 700; line-height: 20px; letter-spacing: -.15px; }
.copy { letter-spacing: -.14px; }
a { text-decoration: underline; text-underline-offset: 2px; text-decoration-thickness: 1px; }
.card { width: 760px; height: 105px; margin: 26px 0 0 313px; padding: 20px 15px 0; background: #fafafa; border-top: 1px dotted #ccc; border-bottom: 1px dotted #ccc; }
.row { display: flex; justify-content: space-between; font-size: 17px; line-height: 22px; }
.prog { letter-spacing: -.05px; }
.fee { color: #000; letter-spacing: -.13px; }
.note { margin: 23px 0 0; font-size: 13.5px; line-height: 18px; letter-spacing: .08px; }
.return { margin: 113px 0 0 313px; font-size: 15px; line-height: 20px; letter-spacing: .06px; }
.rule { width: 950px; height: 1px; margin: 102px 0 0 223px; background: #ececec; }

.downloads { height: 49px; display: flex; align-items: center; background: linear-gradient(#fff 35%, #efefef); border-top: 1px solid #aaadaf; color: #5f6368; }
.doc { width: 5px; height: 15px; margin-left: -1px; }
.fname { width: 152px; margin: 3px 0 0 15px; font: 14px Roboto, sans-serif; letter-spacing: .3px; }
.caret { width: 12px; height: 8px; }
.dsep { width: 1px; height: 36px; margin-left: 16px; background: #bbbdbe; }
.showall { width: 82px; height: 32px; margin: -2px 0 0 1098px; border: 1px solid #a0a2a5; border-radius: 4px; background: #fff; text-align: center; font: 12px/30px Roboto, sans-serif; letter-spacing: .5px; }
.dx { width: 10px; height: 10px; margin: -1px 0 0 13px; }

.dock { position: absolute; left: 35px; top: 847px; width: 1370px; height: 60px; padding: 3px 0 0 2px; display: flex; border: 1px solid rgba(125, 130, 145, .45); border-radius: 5px; background: linear-gradient(180deg, transparent 50%, rgba(50, 75, 145, .15)), linear-gradient(90deg, #243c7b 0, #24407c 115px, #1b2445 150px, #1b2033 480px, #1c202c 850px, #1e2439 1010px, #303137 1140px, #38373a); }
.app { position: relative; width: 44.15px; height: 50px; margin-top: -1px; }
.sep { width: 20px; display: flex; justify-content: center; }
.sep::before { content: ""; width: 1px; height: 25px; margin-top: 10px; background: #6a6e77; }
.sep.tall::before { height: 39px; margin-top: 3px; background: #85878c; }
.badge { position: absolute; left: 28px; top: 1px; width: 16px; height: 16px; border-radius: 50%; background: #fb1522; color: #fff; font-size: 9px; line-height: 16px; text-align: center; }
.dot { position: absolute; left: 20px; top: 44px; width: 4px; height: 4px; border-radius: 50%; background: #aeb7d2; }
.mini { position: absolute; left: 26px; top: 26px; width: 17px; height: 17px; }
</style>
